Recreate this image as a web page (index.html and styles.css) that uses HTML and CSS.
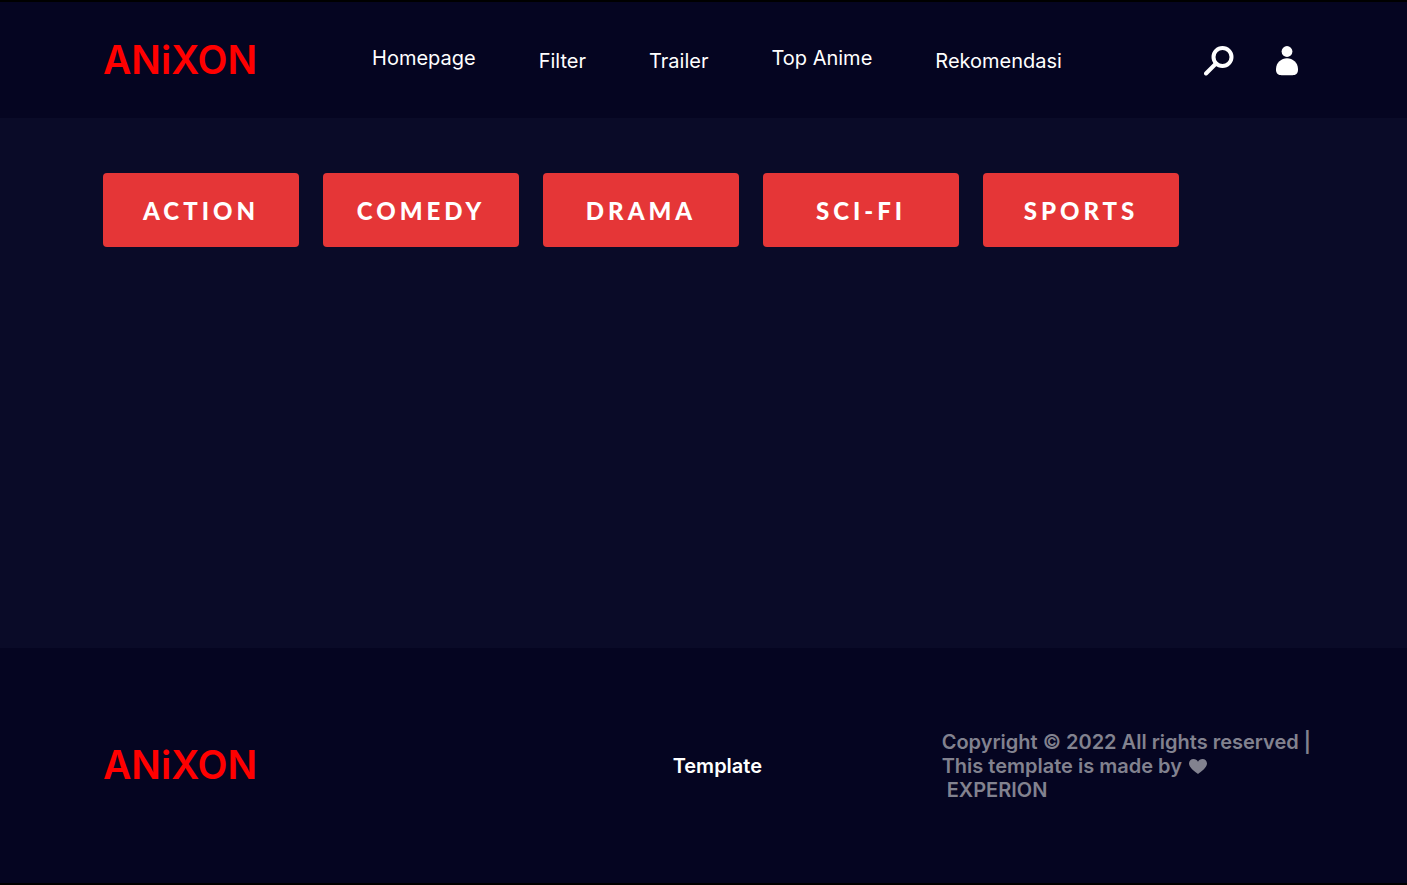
FILE: index.html
```html
<!DOCTYPE html>
<html lang="en">
<head>
<meta charset="utf-8">
<meta name="viewport" content="width=device-width, initial-scale=1">
<title>ANiXON</title>
<link rel="stylesheet" href="styles.css">
</head>
<body>
<header class="site-header">
  <a class="logo" href="#">ANiXON</a>
  <nav class="nav">
    <a class="nav-link raised" href="#">Homepage</a>
    <a class="nav-link" href="#">Filter</a>
    <a class="nav-link" href="#">Trailer</a>
    <a class="nav-link raised" href="#">Top Anime</a>
    <a class="nav-link" href="#">Rekomendasi</a>
  </nav>
  <div class="actions">
    <button class="icon-button" type="button" aria-label="Search">
      <svg width="30" height="30" viewBox="0 0 30 30" fill="none" stroke="#fff"><circle cx="18.5" cy="11" r="9" stroke-width="4"/><path d="M12 17.5 2 27.5" stroke-width="4" stroke-linecap="round"/></svg>
    </button>
    <button class="icon-button" type="button" aria-label="Account">
      <svg width="22" height="30" viewBox="0 0 22 30" fill="#fff"><circle cx="11" cy="5.5" r="5.4"/><path d="M11 12.2C16.500 12.200 22 16.500 22 23V24C22 27.500 19.500 29.200 16.500 29.200H5.500C2.500 29.200 0 27.500 0 24V23C0 16.500 5.500 12.200 11 12.200Z"/></svg>
    </button>
  </div>
</header>
<main class="genres">
  <button class="genre" type="button">ACTION</button>
  <button class="genre" type="button">COMEDY</button>
  <button class="genre" type="button">DRAMA</button>
  <button class="genre" type="button">SCI-FI</button>
  <button class="genre" type="button">SPORTS</button>
</main>
<footer class="site-footer">
  <a class="logo" href="#">ANiXON</a>
  <a class="template-link" href="#">Template</a>
  <p class="copyright">Copyright © 2022 All rights reserved |<br>This template is made by <svg class="heart" width="18" height="15" viewBox="0 0 18 15" role="img" aria-label="love"><path fill="currentColor" d="M9 15C6 12.500 0 8.800 0 4.500C0 1.800 2 0 4.500 0C6.500 0 8.100 1 9 2.800C9.900 1 11.500 0 13.500 0C16 0 18 1.800 18 4.500C18 8.800 12 12.500 9 15Z"/></svg><br>&nbsp;EXPERION</p>
</footer>
</body>
</html>
```
FILE: styles.css
```css
* {
  box-sizing: border-box;
}

body {
  margin: 0;
  min-height: 100vh;
  display: flex;
  flex-direction: column;
  border-top: 2px solid #000;
  border-bottom: 2px solid #000;
  background: #0a0b28;
  color: #fff;
  font-family: Inter, "Liberation Sans", sans-serif;
  font-size: 20px;
  line-height: 24px;
}

a {
  color: inherit;
  text-decoration: none;
}

.site-header {
  display: flex;
  align-items: center;
  padding: 35px 109px 33px 103px;
  background: #050521;
}

.logo {
  padding-bottom: 2px;
  color: #f00;
  font-size: 39px;
  font-weight: 600;
  line-height: 46px;
}

.nav {
  display: flex;
  align-items: center;
  gap: 63px;
  margin-left: 115px;
}

.raised {
  padding-bottom: 6px;
}

.actions {
  display: flex;
  gap: 42px;
  margin-left: auto;
}

.icon-button {
  display: flex;
  padding: 0;
  border: 0;
  background: none;
}

.genres {
  flex: 1;
  display: flex;
  flex-wrap: wrap;
  align-content: flex-start;
  gap: 24px;
  padding: 55px 103px;
}

.genre {
  width: 196px;
  padding: 23px 0 21px;
  border: 0;
  border-radius: 4px;
  background: #e53637;
  color: #fff;
  font-family: Lato, "Open Sans", sans-serif;
  font-size: 24px;
  font-weight: 900;
  line-height: 30px;
  letter-spacing: 4px;
}

.site-footer {
  display: flex;
  align-items: center;
  justify-content: space-between;
  padding: 82px 96px 81px 103px;
  background: #050521;
  font-weight: 600;
}

.template-link {
  margin-left: 236px;
}

.copyright {
  margin: 0;
  color: #82828f;
}

.heart {
  margin-left: 2px;
  vertical-align: -1px;
}
```
